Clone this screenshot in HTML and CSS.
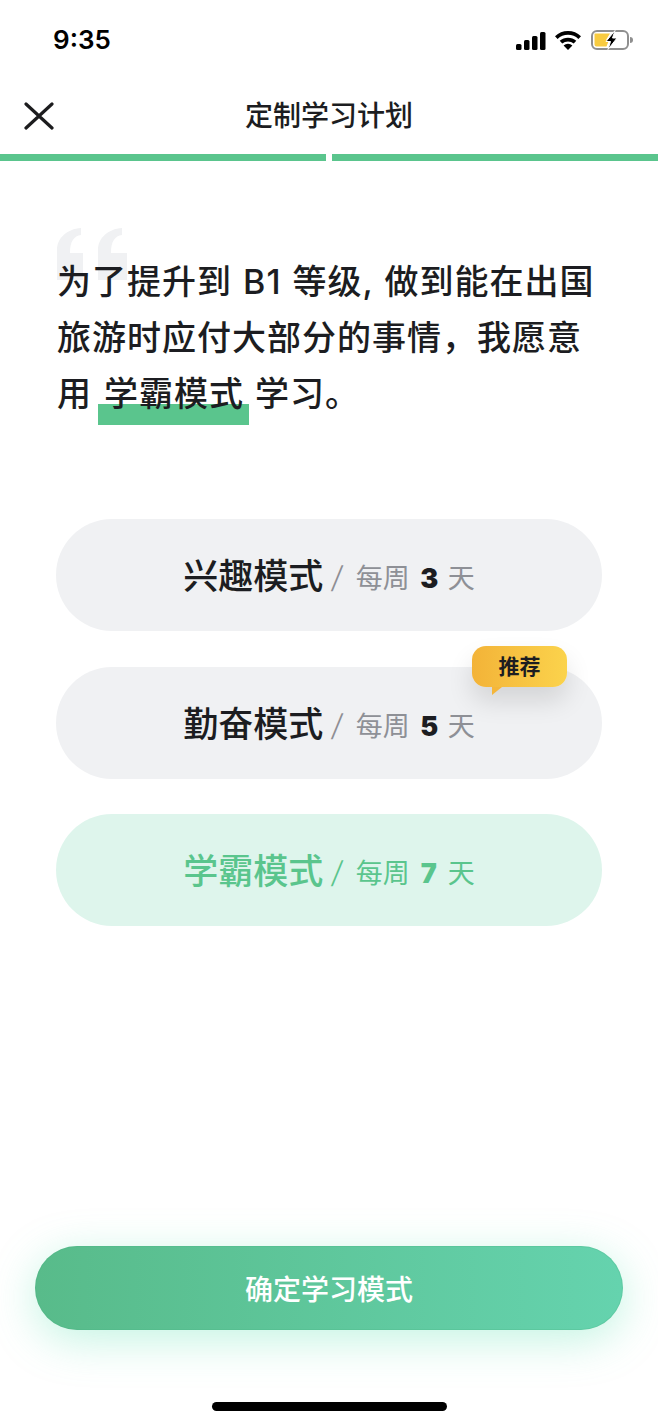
FILE: index.html
```html
<!DOCTYPE html>
<html lang="zh-CN">
<head>
    <meta charset="UTF-8">
    <meta name="viewport" content="width=device-width, initial-scale=1.0">
    <title>定制学习计划</title>
    <link rel="stylesheet" href="styles.css">
</head>
<body>

<div class="page">
    <!-- Status bar -->
    <div class="status-bar">
        <span class="time">9:35</span>
        <div class="status-icons">
            <svg class="icon-signal" width="30" height="18" viewBox="0 0 30 18">
                <rect x="0" y="12" width="5.5" height="6" rx="1.5"/>
                <rect x="8" y="8" width="5.5" height="10" rx="1.5"/>
                <rect x="16" y="4" width="5.5" height="14" rx="1.5"/>
                <rect x="24" y="0" width="5.5" height="18" rx="1.5"/>
            </svg>
            <svg class="icon-wifi" width="26" height="20" viewBox="0 0 26 20">
                <path d="M1.3 7.6 A17 17 0 0 1 24.7 7.6" fill="none" stroke="#000" stroke-width="3.8"/>
                <path d="M6 12.2 A10.5 10.5 0 0 1 20 12.2" fill="none" stroke="#000" stroke-width="3.8"/>
                <path d="M13 20 L8.6 15.6 A6.2 6.2 0 0 1 17.4 15.6 Z"/>
            </svg>
            <svg class="icon-battery" width="42" height="20" viewBox="0 0 42 20">
                <rect x="1" y="1" width="36" height="18" rx="5" fill="none" stroke="#8f8f8f" stroke-width="2"/>
                <path d="M3.5 3.5 H19 L15 10 H18 L15.5 16.5 H5.5 A2 2 0 0 1 3.5 14.5 Z" fill="#f8cb40"/>
                <path d="M24 0.5 L15 11.5 H19.5 L17 19.5 L26 8 H21.5 Z" fill="#000" stroke="#fff" stroke-width="1"/>
                <path d="M39 7 A3 3 0 0 1 39 13 Z" fill="#8f8f8f"/>
            </svg>
        </div>
    </div>

    <!-- Title bar -->
    <div class="nav-bar">
        <svg class="icon-close" width="30" height="28" viewBox="0 0 30 28">
            <path d="M2 2 L28 26 M28 2 L2 26" fill="none" stroke="#1c1c1e" stroke-width="3.2" stroke-linecap="round"/>
        </svg>
        <h1 class="nav-title">定制学习计划</h1>
    </div>

    <!-- Progress -->
    <div class="progress">
        <div class="progress-step"></div>
        <div class="progress-step"></div>
    </div>

    <!-- Goal sentence -->
    <div class="goal">
        <svg class="quote-mark" width="70" height="52" viewBox="0 0 70 52">
            <path d="M0 52 V22 C0 10 10 1 24 0 V7 C17 8 13 13 13 25 H26 V52 Z"/>
            <path d="M41 52 V22 C41 10 51 1 65 0 V7 C58 8 54 13 54 25 H70 V52 Z"/>
        </svg>
        <p class="goal-text">为了提升到 B1 等级, 做到能在出国<br>旅游时应付大部分的事情，我愿意<br>用<span class="goal-mark">学霸模式</span>学习。</p>
    </div>

    <!-- Modes -->
    <div class="modes">
        <div class="mode">
            <span class="mode-name">兴趣模式</span>
            <span class="mode-slash">/</span>
            <span class="mode-days">每周 <b>3</b> 天</span>
        </div>
        <div class="mode">
            <span class="mode-name">勤奋模式</span>
            <span class="mode-slash">/</span>
            <span class="mode-days">每周 <b>5</b> 天</span>
            <div class="badge">推荐</div>
        </div>
        <div class="mode mode-active">
            <span class="mode-name">学霸模式</span>
            <span class="mode-slash">/</span>
            <span class="mode-days">每周 <b>7</b> 天</span>
        </div>
    </div>

    <button class="confirm-btn" type="button">确定学习模式</button>
    <div class="home-bar"></div>
</div>

</body>
</html>
```

FILE: styles.css
```css
* {
    box-sizing: border-box;
}

html, body {
    margin: 0;
    padding: 0;
    background-color: #fff;
}

body {
    font-family: Inter, "Noto Sans CJK SC", sans-serif;
    color: #1c1d21;
}

.page {
    width: 658px;
    height: 1425px;
    display: flex;
    flex-direction: column;
    overflow: hidden;
}

/* Status bar */
.status-bar {
    height: 78px;
    display: flex;
    justify-content: space-between;
    align-items: flex-start;
    padding: 24px 25px 0 53px;
}

.time {
    font-size: 26px;
    line-height: 32px;
    font-weight: 600;
    color: #000;
}

.status-icons {
    display: flex;
    align-items: flex-start;
    gap: 9px;
    padding-top: 6px;
}

.icon-signal {
    margin-top: 2px;
}

.icon-battery {
    margin-left: 1px;
}

/* Title bar */
.nav-bar {
    height: 76px;
    position: relative;
    display: flex;
    justify-content: center;
    align-items: center;
}

.icon-close {
    position: absolute;
    left: 24px;
    top: 24px;
}

.nav-title {
    margin: 0;
    font-size: 28px;
    line-height: 76px;
    font-weight: 500;
}

/* Progress */
.progress {
    display: flex;
    gap: 6px;
}

.progress-step {
    flex: 1;
    height: 7px;
    background-color: #5ac58d;
}

/* Goal sentence */
.goal {
    position: relative;
    padding: 93px 56px 0 57px;
}

.quote-mark {
    position: absolute;
    left: 57px;
    top: 67px;
    fill: #f0f1f3;
}

.goal-text {
    position: relative;
    margin: 0;
    font-size: 34px;
    line-height: 56px;
    font-weight: 500;
    letter-spacing: 1px;
    word-spacing: 1px;
    white-space: nowrap;
}

.goal-mark {
    position: relative;
    display: inline-block;
    margin: 0 6px 0 6px;
    padding: 0 5px 0 6px;
    z-index: 0;
}

.goal-mark::after {
    content: "";
    position: absolute;
    left: 0;
    right: 0;
    bottom: -3px;
    height: 21px;
    background-color: #5ac58d;
    z-index: -1;
}

/* Modes */
.modes {
    display: flex;
    flex-direction: column;
    gap: 36px;
    margin-top: 97px;
    padding: 0 56px;
}

.mode {
    position: relative;
    height: 112px;
    border-radius: 56px;
    background-color: #f0f1f3;
    display: flex;
    justify-content: center;
    align-items: center;
    gap: 11px;
}

.mode-active {
    margin-top: -1px;
    background-color: #def5ec;
    color: #5ac58d;
}

.mode-name {
    margin-top: -3px;
    font-size: 35px;
    font-weight: 500;
}

.mode-slash {
    margin: 3px 2px 0 -2px;
    font-size: 30px;
    font-weight: 300;
    color: #8e8e93;
    transform: skewX(-8deg);
}

.mode-days {
    margin-top: 3px;
    font-size: 27px;
    word-spacing: 3px;
    color: #8e9096;
}

.mode-days b {
    display: inline-block;
    width: 17px;
    font-weight: 900;
    text-align: center;
    color: #1c1d21;
}

.mode-active .mode-slash,
.mode-active .mode-days,
.mode-active .mode-days b {
    color: #5ac58d;
}

.badge {
    position: absolute;
    right: 35px;
    top: -21px;
    width: 95px;
    height: 41px;
    border-radius: 14px;
    background: linear-gradient(90deg, #f3b338, #fbd34c);
    box-shadow: 0 14px 26px rgba(0, 0, 0, 0.12);
    font-size: 21px;
    font-weight: 700;
    line-height: 41px;
    text-align: center;
    color: #1c1d21;
}

.badge::after {
    content: "";
    position: absolute;
    left: 20px;
    top: 41px;
    border-top: 8px solid #f4b63b;
    border-right: 10px solid transparent;
}

/* Bottom */
.confirm-btn {
    display: block;
    width: 588px;
    height: 84px;
    margin: auto 35px 0;
    border: 0;
    border-radius: 42px;
    background: linear-gradient(90deg, #58bb8a, #65d3ae);
    box-shadow: 0 10px 44px rgba(90, 225, 175, 0.36), inset 0 0 0 1px rgba(70, 180, 130, 0.25);
    font-family: inherit;
    font-size: 28px;
    font-weight: 500;
    color: #fff;
}

.home-bar {
    width: 235px;
    height: 9px;
    margin: 72px auto 14px;
    border-radius: 5px;
    background-color: #000;
}
```
